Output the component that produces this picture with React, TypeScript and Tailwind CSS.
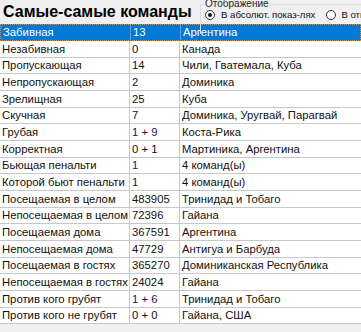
import React from "react";

const rows = [
  { name: "Забивная", value: "13", teams: "Аргентина" },
  { name: "Незабивная", value: "0", teams: "Канада" },
  { name: "Пропускающая", value: "14", teams: "Чили, Гватемала, Куба" },
  { name: "Непропускающая", value: "2", teams: "Доминика" },
  { name: "Зрелищная", value: "25", teams: "Куба" },
  { name: "Скучная", value: "7", teams: "Доминика, Уругвай, Парагвай" },
  { name: "Грубая", value: "1 + 9", teams: "Коста-Рика", purple: true },
  { name: "Корректная", value: "0 + 1", teams: "Мартиника, Аргентина" },
  { name: "Бьющая пенальти", value: "1", teams: "4 команд(ы)", purple: true },
  { name: "Которой бьют пенальти", value: "1", teams: "4 команд(ы)", purple: true },
  { name: "Посещаемая в целом", value: "483905", teams: "Тринидад и Тобаго" },
  { name: "Непосещаемая в целом", value: "72396", teams: "Гайана" },
  { name: "Посещаемая дома", value: "367591", teams: "Аргентина" },
  { name: "Непосещаемая дома", value: "47729", teams: "Антигуа и Барбуда" },
  { name: "Посещаемая в гостях", value: "365270", teams: "Доминиканская Республика" },
  { name: "Непосещаемая в гостях", value: "24024", teams: "Гайана" },
  { name: "Против кого грубят", value: "1 + 6", teams: "Тринидад и Тобаго", purple: true },
  { name: "Против кого не грубят", value: "0 + 0", teams: "Гайана, США" },
];

function Radio({ checked }: { checked?: boolean }) {
  return (
    <span className="w-[10px] h-[10px] rounded-full border border-[#333] bg-white flex items-center justify-center shrink-0">
      {checked && <span className="w-[4px] h-[4px] rounded-full bg-[#111]" />}
    </span>
  );
}

export default function App() {
  return (
    <div className="w-[361px] h-[332px] bg-[#f0f0f0] overflow-hidden font-['Liberation_Sans',Arial,sans-serif] text-[11.3px] text-[#111]">
      {/* header */}
      <div className="h-[24px] flex items-start">
        <h1 className="pl-[3px] pt-[2px] text-[16px] leading-[19px] font-bold text-black whitespace-nowrap w-[200px] shrink-0">
          Самые-самые команды
        </h1>
        <div className="relative mt-[4px] h-[30px] flex-1 border-l border-t border-[#dcdcdc]">
          <span className="absolute -top-[6px] left-[3px] bg-[#f0f0f0] px-[1px] text-[10px] leading-[10px] text-[#222] whitespace-nowrap">
            Отображение
          </span>
          <div className="flex items-center pt-[3px] pl-[4px] text-[9.6px] leading-[13px] whitespace-nowrap">
            <Radio checked />
            <span className="ml-[6px] mr-[11px]">В абсолют. показ-лях</span>
            <Radio />
            <span className="ml-[5px]">В относительных</span>
          </div>
        </div>
      </div>

      {/* table */}
      <div className="bg-white">
        {rows.map((r, i) => {
          const selected = i === 0;
          const h = i % 3 === 2 ? "h-[16px]" : "h-[17px]";
          return (
            <div
              key={r.name}
              className={`flex ${h} border-b ${
                selected
                  ? "bg-[#0078d7] text-white border border-dotted border-[#e0902a]"
                  : "border-[#c8c8c8]"
              }`}
            >
              <div
                className={`w-[130px] shrink-0 pl-[2px] flex items-center whitespace-nowrap overflow-hidden border-r ${
                  selected ? "border-[#5fa3e3] w-[129px]" : "border-[#c8c8c8]"
                }`}
              >
                {r.name}
              </div>
              <div
                className={`w-[50px] shrink-0 pl-[2px] flex items-center whitespace-nowrap border-r ${
                  selected ? "border-[#5fa3e3]" : "border-[#c8c8c8]"
                } ${!selected && r.purple ? "text-[#3a0a48]" : ""}`}
              >
                {r.value}
              </div>
              <div className="flex-1 pl-[2px] flex items-center whitespace-nowrap overflow-hidden">
                {r.teams}
              </div>
            </div>
          );
        })}
      </div>
    </div>
  );
}
